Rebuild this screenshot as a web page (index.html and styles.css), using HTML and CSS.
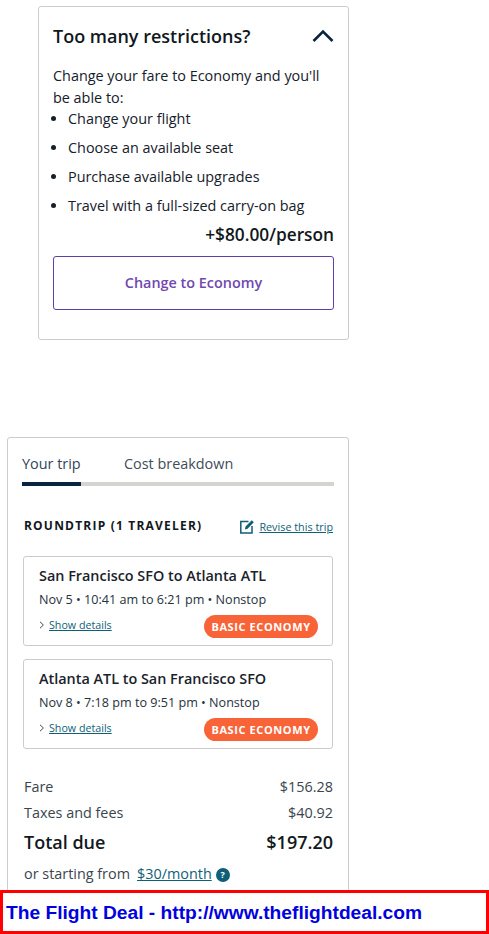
FILE: index.html
```html
<!DOCTYPE html>
<html lang="en">
<head>
<meta charset="utf-8">
<title>Trip summary</title>
<link rel="stylesheet" href="styles.css">
</head>
<body>
<div class="page">
  <section class="upsell">
    <div class="upsell-head">
      <h2>Too many restrictions?</h2>
      <svg class="chev-up" width="22" height="14" viewBox="0 0 22 14"><path d="M1.500 12 11 2.500 20.500 12" fill="none" stroke="#0c2340" stroke-width="2.600"/></svg>
    </div>
    <p class="upsell-intro">Change your fare to Economy and you'll be able to:</p>
    <ul class="upsell-list">
      <li>Change your flight</li>
      <li>Choose an available seat</li>
      <li>Purchase available upgrades</li>
      <li>Travel with a full-sized carry-on bag</li>
    </ul>
    <div class="upsell-price">+$80.00/person</div>
    <button class="upsell-btn">Change to Economy</button>
  </section>

  <section class="trip">
    <div class="tabs">
      <span class="tab active">Your trip</span>
      <span class="tab">Cost breakdown</span>
    </div>
    <div class="trip-head">
      <h3>ROUNDTRIP (1 TRAVELER)</h3>
      <a class="revise">
        <svg width="15" height="15" viewBox="0 0 15 15"><path d="M8.500 2.500H.8v11.500h11.200V7" fill="none" stroke="#0f5f78" stroke-width="1.500"/><path d="M4.800 10.500 5.600 7.500 11.800 1.300l2 2L7.600 9.700z" fill="#0f5f78"/></svg>
        <span>Revise this trip</span>
      </a>
    </div>
    <article class="flight">
      <h4>San Francisco SFO to Atlanta ATL</h4>
      <p>Nov 5 • 10:41 am to 6:21 pm • Nonstop</p>
      <div class="flight-foot">
        <a class="details"><svg width="6" height="8" viewBox="0 0 6 8"><path d="M1 .8 4.400 4 1 7.200" fill="none" stroke="#3f4d5a" stroke-width="1"/></svg><span>Show details</span></a>
        <span class="badge">BASIC ECONOMY</span>
      </div>
    </article>
    <article class="flight">
      <h4>Atlanta ATL to San Francisco SFO</h4>
      <p>Nov 8 • 7:18 pm to 9:51 pm • Nonstop</p>
      <div class="flight-foot">
        <a class="details"><svg width="6" height="8" viewBox="0 0 6 8"><path d="M1 .8 4.400 4 1 7.200" fill="none" stroke="#3f4d5a" stroke-width="1"/></svg><span>Show details</span></a>
        <span class="badge">BASIC ECONOMY</span>
      </div>
    </article>
    <div class="row fare"><span>Fare</span><span>$156.28</span></div>
    <div class="row taxes"><span>Taxes and fees</span><span>$40.92</span></div>
    <div class="row total"><span>Total due</span><span>$197.20</span></div>
    <div class="monthly">
      <span>or starting from</span>
      <a>$30/month</a>
      <span class="help">?</span>
    </div>
  </section>
  <div class="banner">The Flight Deal - http://www.theflightdeal.com</div>
</div>
</body>
</html>
```
FILE: styles.css
```css
* { box-sizing: border-box; }
html, body { margin: 0; padding: 0; background: #fff; }
body { font-family: "Open Sans", sans-serif; color: #15202b; overflow: hidden; }
.page { width: 489px; height: 934px; padding-top: 6px; position: relative; overflow: hidden; }

.upsell {
  width: 311px; height: 334px; margin-left: 38px;
  border: 1px solid #cccccc; border-radius: 3px;
  padding: 14px 14px 0;
}
.upsell-head { display: flex; justify-content: space-between; align-items: center; height: 30px; }
.upsell-head h2 { margin: 0; font-size: 18px; font-weight: 600; color: #111820; }
.chev-up { display: block; }
.upsell-intro { margin: 14px 0 0; font-size: 14.400px; line-height: 21.500px; }
.upsell-list { margin: 0; padding: 0 0 0 15px; font-size: 14.400px; line-height: 21px; }
.upsell-list li { margin-bottom: 8px; }
.upsell-price { margin-top: 1px; text-align: right; font-size: 17.280px; font-weight: 600; line-height: 22px; color: #111820; }
.upsell-btn {
  display: block; width: 281px; height: 54px; margin-top: 10px; padding: 0 0 2px;
  background: #fff; border: 1px solid #5f3fa8; border-radius: 3px;
  font: 600 14.400px "Open Sans", sans-serif; color: #7048b0;
}

.trip {
  width: 342px; height: 500px; margin: 97px 0 0 7px;
  border: 1px solid #cccccc; border-radius: 3px;
  padding: 14px 14px 0 14px;
}
.tabs { display: flex; gap: 43px; height: 34px; border-bottom: 4px solid #d4d4d0; }
.tab { font-size: 14.400px; line-height: 24px; color: #3f4d5a; height: 34px; }
.tab.active { color: #2f4558; border-bottom: 4px solid #0c2340; width: 59px; }
.trip-head { display: flex; justify-content: space-between; align-items: center; margin-top: 31px; height: 20px; padding: 0 1px 0 2px; }
.trip-head h3 { margin: 0 0 4px; font-size: 12px; font-weight: 700; letter-spacing: 1.200px; color: #111820; }
.revise { display: flex; align-items: center; gap: 4px; color: #0f5f78; font-size: 10.800px; text-decoration: underline; margin-bottom: 2px; }
.flight {
  height: 90px; margin: 0 1px 13px 1px;
  border: 1px solid #cccccc; border-radius: 3px;
  padding: 8px 14px 0 15px;
}
.trip-head + .flight { margin-top: 19px; }
.flight h4 { margin: 0; font-size: 14.400px; font-weight: 600; line-height: 22px; color: #1a222b; }
.flight p { margin: 3px 0 0; font-size: 12.600px; line-height: 20px; color: #26323d; }
.flight-foot { display: flex; justify-content: space-between; align-items: center; margin-top: 5px; }
.details { display: flex; align-items: center; gap: 4px; font-size: 10.700px; color: #0f5f78; margin-bottom: 4px; }
.details span { text-decoration: underline; }
.badge {
  height: 23px; width: 114px; border-radius: 12px; background: #f96338;
  color: #fff; font-size: 11px; font-weight: 700; letter-spacing: .6px;
  display: flex; align-items: center; justify-content: center;
}
.row { display: flex; justify-content: space-between; padding: 0 1px 0 2px; }
.fare, .taxes { font-size: 14.400px; line-height: 26px; color: #3a4550; }
.fare { margin-top: 25px; }
.total { font-size: 18px; font-weight: 600; line-height: 32px; color: #111820; }
.monthly { display: flex; align-items: center; gap: 7px; margin-top: 5px; padding-left: 2px; font-size: 14.400px; line-height: 22px; color: #3a4550; }
.monthly a { color: #0f5f78; text-decoration: underline; }
.help {
  width: 14px; height: 14px; border-radius: 50%; background: #0f5f78; color: #fff;
  font-size: 9px; font-weight: 700; line-height: 14px; text-align: center; margin-left: -3px; margin-top: 2px;
}

.banner {
  position: absolute; left: 0; top: 890px; width: 489px; height: 44px;
  background: #fff; border: 3px solid #ff0000;
  padding-left: 3px;
  font: 700 19.200px/39px "Liberation Sans", Arial, sans-serif; color: #0000e0;
}
```
